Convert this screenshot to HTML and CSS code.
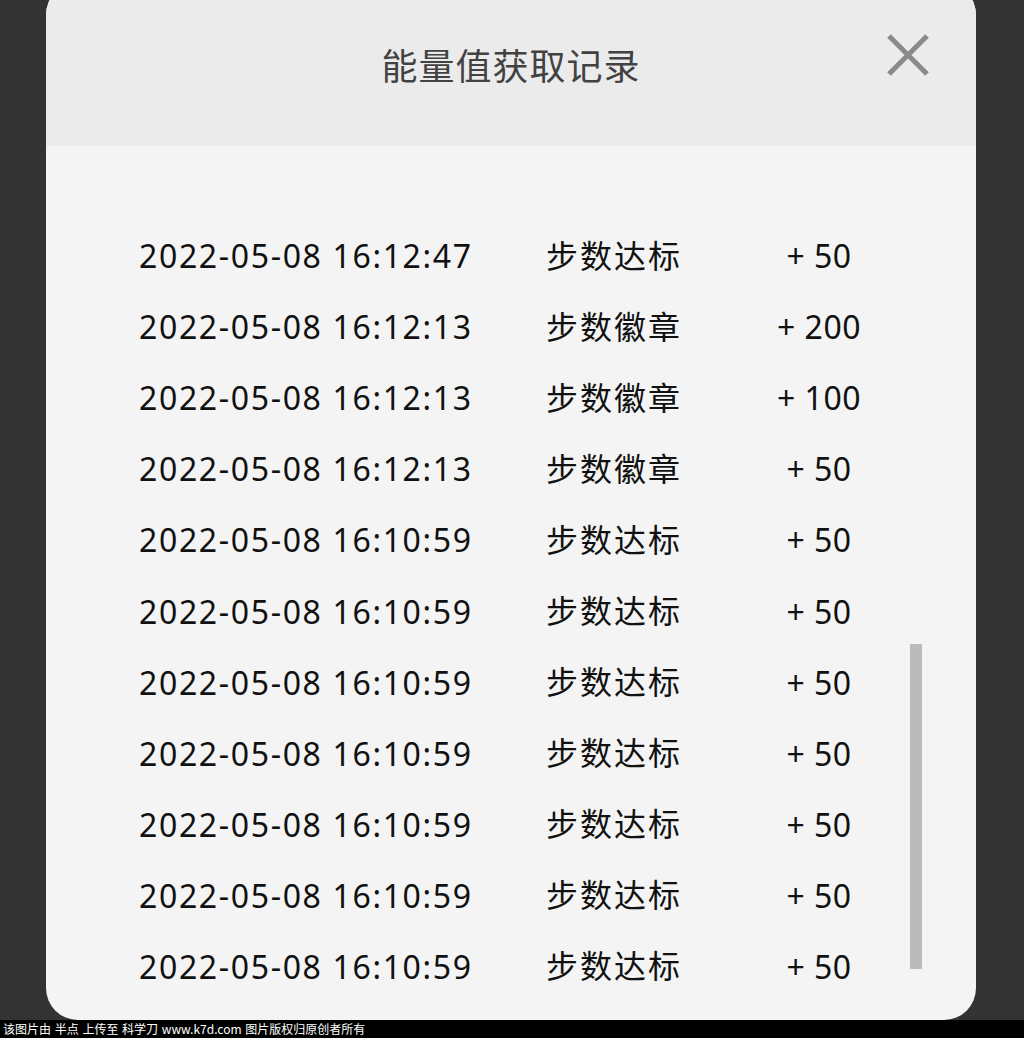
FILE: index.html
```html
<!DOCTYPE html>
<html lang="zh-CN">
<head>
    <meta charset="UTF-8">
    <meta name="viewport" content="width=device-width, initial-scale=1.0">
    <title>能量值获取记录</title>
    <link rel="stylesheet" href="styles.css">
</head>
<body>
    <div class="dialog">
        <div class="dialog-header">
            <h1>能量值获取记录</h1>
            <button class="close-btn" aria-label="关闭">
                <svg width="44" height="44" viewBox="0 0 44 44">
                    <path d="M3 3 L41 41 M41 3 L3 41" stroke="#8a8a8a" stroke-width="5" stroke-linecap="butt" fill="none"/>
                </svg>
            </button>
        </div>
        <div class="dialog-body">
            <ul class="record-list">
                <li><span class="time">2022-05-08 16:12:47</span><span class="type">步数达标</span><span class="amount">+ 50</span></li>
                <li><span class="time">2022-05-08 16:12:13</span><span class="type">步数徽章</span><span class="amount">+ 200</span></li>
                <li><span class="time">2022-05-08 16:12:13</span><span class="type">步数徽章</span><span class="amount">+ 100</span></li>
                <li><span class="time">2022-05-08 16:12:13</span><span class="type">步数徽章</span><span class="amount">+ 50</span></li>
                <li><span class="time">2022-05-08 16:10:59</span><span class="type">步数达标</span><span class="amount">+ 50</span></li>
                <li><span class="time">2022-05-08 16:10:59</span><span class="type">步数达标</span><span class="amount">+ 50</span></li>
                <li><span class="time">2022-05-08 16:10:59</span><span class="type">步数达标</span><span class="amount">+ 50</span></li>
                <li><span class="time">2022-05-08 16:10:59</span><span class="type">步数达标</span><span class="amount">+ 50</span></li>
                <li><span class="time">2022-05-08 16:10:59</span><span class="type">步数达标</span><span class="amount">+ 50</span></li>
                <li><span class="time">2022-05-08 16:10:59</span><span class="type">步数达标</span><span class="amount">+ 50</span></li>
                <li><span class="time">2022-05-08 16:10:59</span><span class="type">步数达标</span><span class="amount">+ 50</span></li>
            </ul>
            <div class="scroll-thumb"></div>
        </div>
    </div>
    <div class="watermark">该图片由 半点 上传至 科学刀 www.k7d.com 图片版权归原创者所有</div>
</body>
</html>
```

FILE: styles.css
```css
html, body {
    margin: 0;
    height: 1038px;
    overflow: hidden;
}

body {
    background-color: #333333;
    font-family: "Noto Sans", "Noto Sans CJK SC", sans-serif;
    display: flex;
    flex-direction: column;
}

.dialog {
    margin: -17px 48px 0 46px;
    height: 1037px;
    flex: 0 0 auto;
    background-color: #f4f4f4;
    border-radius: 32px;
    overflow: hidden;
    display: flex;
    flex-direction: column;
}

.dialog-header {
    position: relative;
    height: 163px;
    box-sizing: border-box;
    padding-top: 17px;
    background-color: #ebebeb;
}

.dialog-header h1 {
    margin: 39px 0 0;
    line-height: 50px;
    text-align: center;
    font-family: "Noto Sans CJK SC", sans-serif;
    font-size: 36px;
    font-weight: 400;
    letter-spacing: 1px;
    color: #424242;
}

.close-btn {
    position: absolute;
    top: 50px;
    right: 46px;
    width: 44px;
    height: 44px;
    padding: 0;
    border: none;
    background: none;
    cursor: pointer;
}

.close-btn svg {
    display: block;
}

.dialog-body {
    position: relative;
    flex: 1;
    padding-top: 74px;
}

.record-list {
    list-style: none;
    margin: 0;
    padding: 0 0 0 93px;
}

.record-list li {
    display: grid;
    grid-template-columns: 407px 200px 146px;
    height: 71.1px;
    align-items: center;
    font-size: 32px;
    letter-spacing: 1.65px;
    color: #111111;
}

.record-list .type {
    margin-top: -4px;
    font-family: "Noto Sans CJK SC", sans-serif;
    letter-spacing: 2px;
}

.record-list .amount {
    text-align: center;
    letter-spacing: 0.5px;
}

.scroll-thumb {
    position: absolute;
    top: 498px;
    left: 864px;
    width: 12px;
    height: 325px;
    background-color: #bbbbbb;
}

.watermark {
    height: 18px;
    line-height: 18px;
    padding-left: 3px;
    background-color: #000000;
    color: #ffffff;
    font-family: "Noto Sans CJK SC", sans-serif;
    font-size: 12px;
    word-spacing: 1px;
    white-space: nowrap;
}
```
